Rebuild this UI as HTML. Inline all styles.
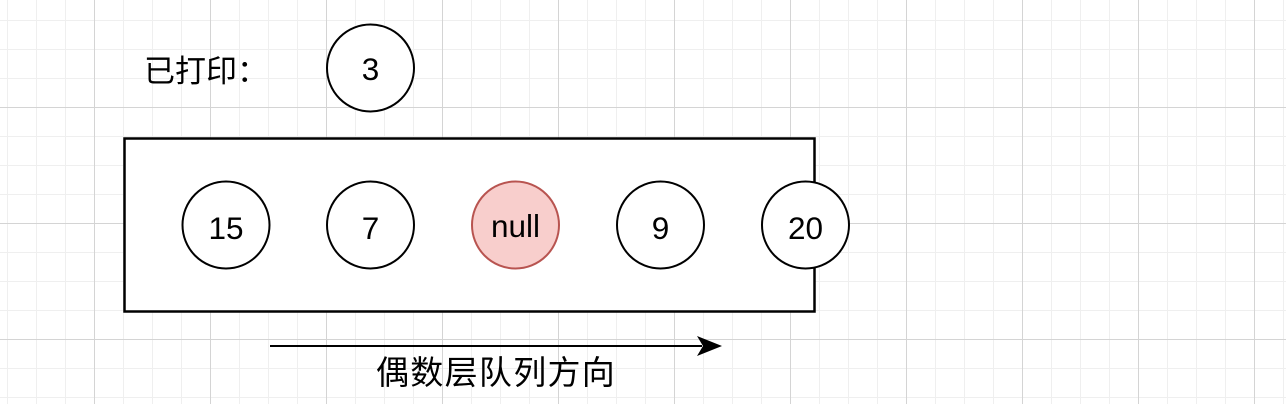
<!DOCTYPE html>
<html><head><meta charset="utf-8"><style>
html,body{margin:0;padding:0;}
body{width:1286px;height:404px;overflow:hidden;background:#fff;position:relative;
background-image:
linear-gradient(to right,#d4d4d4 1px,transparent 1px),
linear-gradient(to bottom,#d4d4d4 1px,transparent 1px),
linear-gradient(to right,#efefef 1px,transparent 1px),
linear-gradient(to bottom,#efefef 1px,transparent 1px);
background-size:116px 116px,116px 116px,29px 29px,29px 29px;
background-position:94px 0,0 107px,7px 0,0 20px;
font-family:"Liberation Sans","Noto Sans CJK SC",sans-serif;}
</style></head><body>
<svg width="1286" height="404" style="position:absolute;left:0;top:0">
<rect x="124.5" y="138.5" width="690" height="173" fill="#fff" stroke="#000" stroke-width="2.5"/>
<g stroke="#000" stroke-width="2" fill="#fff">
<circle cx="370.5" cy="68" r="43.5"/>
<circle cx="226" cy="225" r="43.5"/>
<circle cx="370.5" cy="225" r="43.5"/>
<circle cx="515.5" cy="225" r="43.5" fill="#f8cecc" stroke="#b85450"/>
<circle cx="660.5" cy="225" r="43.5"/>
<circle cx="805.5" cy="225" r="43.5"/>
</g>
<g font-family="Liberation Sans, sans-serif" font-size="31.5" text-anchor="middle" fill="#000">
<text x="370.5" y="80">3</text>
<text x="226" y="239">15</text>
<text x="370.5" y="239">7</text>
<text x="515.5" y="237">null</text>
<text x="660.5" y="239">9</text>
<text x="805.5" y="239">20</text>
</g>
<line x1="270" y1="346" x2="702" y2="346" stroke="#000" stroke-width="2"/>
<path d="M722 346 L697 336 L703 346 L697 356 Z" fill="#000"/>
<text x="144" y="82" font-family="Liberation Sans, Noto Sans CJK SC, sans-serif" font-size="31">已打印：</text>
<text x="376" y="384" font-family="Liberation Sans, Noto Sans CJK SC, sans-serif" font-size="33" letter-spacing="1.3">偶数层队列方向</text>
</svg>
</body></html>
